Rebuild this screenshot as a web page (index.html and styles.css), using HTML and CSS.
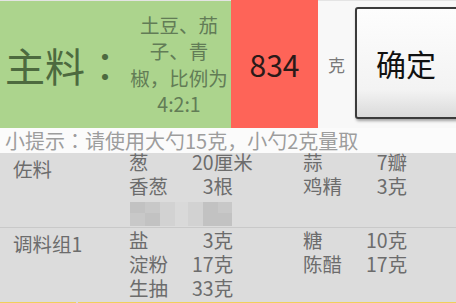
FILE: index.html
```html
<!DOCTYPE html>
<html>
  <head>
    <title>称量</title>
    <link rel="stylesheet" href="styles.css">
  </head>
  <body>
  <div class="weigh-panel">
    <div class="main-label">
      <span class="main-title">主料<span class="colon">：</span></span>
      <span class="main-desc">土豆、茄<br>子、青<br>椒，比例为<br>4:2:1</span>
    </div>
    <div class="amount">834</div>
    <div class="unit">克</div>
    <div class="confirm-wrap">
      <button class="confirm">确定</button>
    </div>
  </div>
  <div class="hint">小提示<span class="colon">：</span>请使用大勺15克，小勺2克量取</div>
  <div class="group first">
    <div class="group-title">佐料</div>
    <div class="group-items">
      <span>葱</span><span class="qty">20厘米</span><span></span><span>蒜</span><span class="qty">7瓣</span>
      <span>香葱</span><span class="qty">3根</span><span></span><span>鸡精</span><span class="qty">3克</span>
      <div class="redacted">
        <i class="px a"></i><i class="px b"></i><i class="px c"></i><i class="px gap"></i><i class="px c"></i><i class="px a"></i><i class="px b"></i>
        <i class="px b"></i><i class="px a"></i><i class="px c"></i><i class="px gap"></i><i class="px c"></i><i class="px a"></i><i class="px a"></i>
      </div>
    </div>
  </div>
  <div class="group">
    <div class="group-title">调料组1</div>
    <div class="group-items">
      <span>盐</span><span class="qty">3克</span><span></span><span>糖</span><span class="qty">10克</span>
      <span>淀粉</span><span class="qty">17克</span><span></span><span>陈醋</span><span class="qty">17克</span>
      <span>生抽</span><span class="qty">33克</span>
    </div>
  </div>
  <div class="tab-line">
    <div class="tab-seg short"></div>
    <div class="tab-seg"></div>
  </div>
</body>
</html>
```

FILE: styles.css
```css
body {
  margin: 0;
  width: 456px;
  height: 303px;
  overflow: hidden;
  background-color: #dcdcdc;
  font-family: "Noto Sans CJK SC", "Noto Sans", sans-serif;
}

.colon {
  font-family: "Noto Sans CJK TC", sans-serif;
}

.weigh-panel {
  display: flex;
  height: 128px;
  background-color: #f8f8f8;
  border-top: 1px solid #e4e4e4;
  box-sizing: border-box;
}

.main-label {
  flex: 0 0 231px;
  display: flex;
  align-items: center;
  background-color: #acd48d;
}

.main-title {
  width: 129px;
  padding-left: 5px;
  box-sizing: border-box;
  font-size: 40px;
  color: #4d6a3f;
  white-space: nowrap;
}

.main-desc {
  width: 100px;
  font-size: 19.5px;
  line-height: 26.5px;
  text-align: center;
  white-space: nowrap;
  color: #627c56;
}

.amount {
  flex: 0 0 87px;
  margin-top: -1px;
  display: flex;
  align-items: center;
  justify-content: center;
  background-color: #fe6458;
  font-size: 30px;
  color: #2b1a18;
}

.unit {
  flex: 0 0 37px;
  display: flex;
  align-items: center;
  justify-content: center;
  font-size: 17px;
  color: #7a7a7a;
}

.confirm-wrap {
  flex: 1;
  min-width: 0;
  padding: 6px 0 9px;
}

.confirm {
  width: 106px;
  height: 100%;
  border: 2px solid #3b3b3b;
  border-radius: 3px;
  background: linear-gradient(#fdfdfd, #f3f3f3 75%, #dadada);
  box-shadow: 1px 2px 3px rgba(0, 0, 0, 0.35);
  font-family: "Noto Sans CJK SC", sans-serif;
  font-size: 30px;
  color: #111;
  padding: 0 4px 0 0;
}

.hint {
  height: 25px;
  line-height: 25px;
  padding-left: 5px;
  background-color: #fbfbfb;
  font-size: 20px;
  color: #9d9d9d;
  white-space: nowrap;
}

.group {
  display: flex;
  height: 74px;
  color: #6c6c6c;
  font-size: 19.5px;
}

.group.first {
  border-bottom: 1px solid #c9c9c9;
}

.group-title {
  width: 129px;
  padding: 4px 0 0 13px;
  box-sizing: border-box;
  line-height: 24px;
}

.group-items {
  display: grid;
  grid-template-columns: 63px 41px 70px 63px 41px;
  grid-auto-rows: 24px;
  line-height: 24px;
  white-space: nowrap;
}

.group.first .group-items {
  margin-top: -3px;
}

.qty {
  text-align: right;
}

.redacted {
  grid-column: 1 / 3;
  display: grid;
  grid-template-columns: 15px 15px 15px 13px 15px 15px 14px;
  grid-template-rows: 11px 13px;
  margin: 4px 0 0 1px;
}

.px.a { background-color: #c2c2c2; }
.px.b { background-color: #c8c8c8; }
.px.c { background-color: #d2d2d2; }
.px.gap { background-color: #d9d9d9; }

.tab-line {
  display: flex;
  gap: 2px;
  height: 1px;
}

.tab-seg {
  flex: 1;
  background-color: #f1cf5c;
}

.tab-seg.short {
  flex: 0 0 76px;
}
```
